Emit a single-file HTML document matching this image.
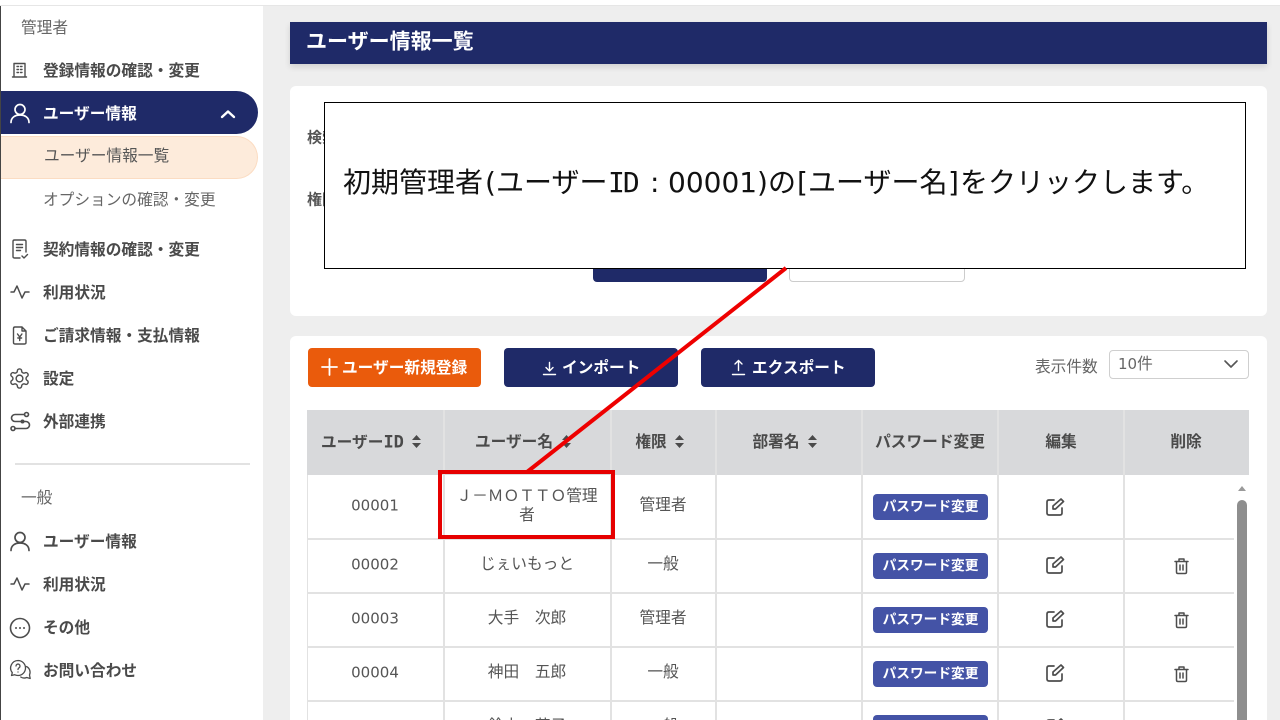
<!DOCTYPE html>
<html lang="ja">
<head>
<meta charset="utf-8">
<title>ユーザー情報一覧</title>
<style>
html,body{margin:0;padding:0;background:#eeeeee;overflow:hidden}
body{width:1280px;height:720px;font-family:"Liberation Sans","Noto Sans CJK JP",sans-serif;color:#555}
#root{position:absolute;left:0;top:0;width:1280px;height:720px;overflow:hidden;background:#eee}
#root div,#root span,#root svg{position:absolute;box-sizing:border-box}
.t{white-space:nowrap;line-height:1;font-size:15.7px;transform:translateY(calc(-50% + 2px))}
.c{white-space:nowrap;line-height:1;font-size:15.7px;transform:translate(-50%,calc(-50% + 2px));text-align:center}
.d{font-family:"DejaVu Sans",sans-serif;font-size:15px}
.b{font-weight:700}
.n{color:#4a4a4a;font-weight:700}
svg{fill:none;stroke:#4d4d4d;stroke-width:1.7;stroke-linecap:round;stroke-linejoin:round}
.h{color:#4a4a4a;font-weight:700}
.v{width:2px;background:#e2e2e2}
.hl{height:2px;background:#e2e2e2;left:307px;width:927px}
.badge{left:873px;width:115px;height:26px;background:#4453a6;border-radius:4px;color:#fff;font-size:13.7px;font-weight:700;text-align:center;line-height:25px;white-space:nowrap}
.btn{top:348px;height:39px;border-radius:4px;background:#1f2a68}
.s{fill:#4a4a4a;stroke:none}
.o{top:182px;font-size:28px;line-height:1;color:#111;white-space:nowrap;transform:translateY(calc(-50% + 1px))}
.ol{font-family:"DejaVu Sans",sans-serif}
</style>
</head>
<body>
<div id="root">
<!-- top bar and sidebar -->
<div style="left:0;top:0;width:1280px;height:6px;background:#fff;border-bottom:1px solid #e6e6e6"></div>
<div style="left:0;top:6px;width:263px;height:714px;background:#fff;border-left:1px solid #444"></div>

<div class="t" style="left:21px;top:27px;color:#666">管理者</div>
<svg style="left:11px;top:61px;stroke-width:1.4" width="18" height="18" viewBox="0 0 18 18"><path d="M3 16V2.500h11V16zM1.500 16h14M6 5.500h1.500M9.500 5.500H11M6 8.500h1.500M9.500 8.500H11M6 11.500h1.500M9.500 11.500H11"/></svg>
<div class="t n" style="left:43px;top:70px">登録情報の確認・変更</div>

<div style="left:1px;top:91px;width:257px;height:43px;background:#1f2a68;border-radius:0 22px 22px 0"></div>
<svg style="left:8px;top:102px;stroke:#fff" width="24" height="24" viewBox="0 0 24 24"><circle cx="12" cy="7.500" r="5"/><path d="M3 20.500c0-5 4-7.500 9-7.500s9 2.500 9 7.500"/></svg>
<div class="t b" style="left:43px;top:113px;color:#fff">ユーザー情報</div>
<svg style="left:219px;top:107px;stroke:#fff;stroke-width:2.400" width="18" height="14" viewBox="0 0 18 14"><path d="M3 10l6-5.500 6 5.500"/></svg>

<div style="left:1px;top:136px;width:257px;height:43px;background:#fdebdb;border:1px solid #fbdcc2;border-left:0;border-radius:0 22px 22px 0"></div>
<div class="t" style="left:44px;top:155px;color:#555">ユーザー情報一覧</div>
<div class="t" style="left:43px;top:199px;color:#666">オプションの確認・変更</div>

<svg style="left:10px;top:238px;stroke-width:1.400" width="20" height="22" viewBox="0 0 20 22"><path d="M10 20H4.500Q3 20 3 18.500V3.500Q3 2 4.500 2h10Q16 2 16 3.500V14M6.500 6.500h6M6.500 9.500h6M6.500 12.500h4M12 18l2 2 3.500-3.500"/></svg>
<div class="t n" style="left:43px;top:249px">契約情報の確認・変更</div>
<svg style="left:9px;top:282px;stroke-width:1.500" width="22" height="20" viewBox="0 0 22 20"><path d="M2 10h3l3-6 5 12 3-6h4"/></svg>
<div class="t n" style="left:43px;top:292px">利用状況</div>
<svg style="left:10px;top:325px;stroke-width:1.400" width="20" height="21" viewBox="0 0 20 21"><path d="M12 2H5Q3.500 2 3.500 3.500v14Q3.500 19 5 19h9.500Q16 19 16 17.500V6zM12 2v4h4M7.500 9l2.200 3 2.200-3M9.700 12v3.500M7.800 13h3.800"/></svg>
<div class="t n" style="left:43px;top:335px">ご請求情報・支払情報</div>
<svg style="left:8px;top:367px;stroke-width:1.500" width="23" height="23" viewBox="0 0 24 24"><circle cx="12" cy="12" r="3.500"/><path d="M12.220 2h-.44a2 2 0 0 0-2 2v.18a2 2 0 0 1-1 1.730l-.43.250a2 2 0 0 1-2 0l-.15-.08a2 2 0 0 0-2.730.730l-.22.380a2 2 0 0 0 .730 2.730l.15.100a2 2 0 0 1 1 1.720v.510a2 2 0 0 1-1 1.740l-.15.090a2 2 0 0 0-.730 2.730l.22.380a2 2 0 0 0 2.730.730l.15-.08a2 2 0 0 1 2 0l.43.250a2 2 0 0 1 1 1.730V20a2 2 0 0 0 2 2h.44a2 2 0 0 0 2-2v-.18a2 2 0 0 1 1-1.730l.43-.25a2 2 0 0 1 2 0l.15.08a2 2 0 0 0 2.730-.73l.22-.39a2 2 0 0 0-.73-2.730l-.15-.08a2 2 0 0 1-1-1.740v-.5a2 2 0 0 1 1-1.740l.15-.09a2 2 0 0 0 .73-2.730l-.22-.38a2 2 0 0 0-2.730-.73l-.15.08a2 2 0 0 1-2 0l-.43-.25a2 2 0 0 1-1-1.730V4a2 2 0 0 0-2-2z"/></svg>
<div class="t n" style="left:43px;top:378px">設定</div>
<svg style="left:9px;top:411px;stroke-width:1.600" width="22" height="21" viewBox="0 0 22 21"><circle cx="17.500" cy="3.500" r="2"/><circle cx="4" cy="17.500" r="2"/><circle cx="13.500" cy="10.500" r="1.200" fill="#4d4d4d"/><path d="M15.500 3.500H6a3.500 3.500 0 0 0 0 7h11a3.500 3.500 0 0 1 0 7H6"/></svg>
<div class="t n" style="left:43px;top:421px">外部連携</div>

<div style="left:15px;top:463px;width:235px;height:2px;background:#e2e2e2"></div>
<div class="t" style="left:21px;top:497px;color:#666">一般</div>
<svg style="left:8px;top:530px" width="24" height="24" viewBox="0 0 24 24"><circle cx="12" cy="7.500" r="5"/><path d="M3 20.500c0-5 4-7.500 9-7.500s9 2.500 9 7.500"/></svg>
<div class="t n" style="left:43px;top:541px">ユーザー情報</div>
<svg style="left:9px;top:574px;stroke-width:1.500" width="22" height="20" viewBox="0 0 22 20"><path d="M2 10h3l3-6 5 12 3-6h4"/></svg>
<div class="t n" style="left:43px;top:584px">利用状況</div>
<svg style="left:9px;top:617px;stroke-width:1.600" width="22" height="22" viewBox="0 0 22 22"><circle cx="11" cy="11" r="9.500"/><path d="M7 11h.01M11 11h.01M15 11h.01" stroke-width="2"/></svg>
<div class="t n" style="left:43px;top:627px">その他</div>
<svg style="left:9px;top:659px;stroke-width:1.300" width="23" height="22" viewBox="0 0 23 22"><path d="M9 1.500a7.500 7.500 0 0 1 0 15c-1.500 0-2.500-.3-3.500-.8L2.500 16.500l.8-2.800A7.500 7.500 0 0 1 9 1.500z"/><path d="M7 7a2 2 0 1 1 3 1.800c-.7.400-1 .8-1 1.700M9 13h.01M17.500 7.500a6.500 6.500 0 0 1 3 8.500l.7 3.500-3.500-1a6.500 6.500 0 0 1-6-.5"/></svg>
<div class="t n" style="left:43px;top:670px">お問い合わせ</div>

<!-- main -->
<div style="left:290px;top:22px;width:977px;height:42px;background:#1f2a68;box-shadow:0 3px 6px rgba(0,0,0,.12)"></div>
<div class="t b" style="left:306px;top:40px;font-size:21px;color:#fff">ユーザー情報一覧</div>

<div style="left:290px;top:86px;width:977px;height:230px;background:#fff;border-radius:6px"></div>
<div class="t b" style="left:307px;top:136px;color:#555;font-size:15px">検索</div>
<div class="t b" style="left:307px;top:198px;color:#555;font-size:15px">権限</div>
<div style="left:593px;top:250px;width:174px;height:32px;background:#1f2a68;border-radius:4px"></div>
<div style="left:789px;top:250px;width:176px;height:32px;background:#fff;border:1px solid #ccc;border-radius:4px"></div>

<div style="left:290px;top:336px;width:977px;height:400px;background:#fff;border-radius:6px"></div>

<div class="btn" style="left:308px;width:173px;background:#ea5b0c"></div>
<svg style="left:321px;top:358px;stroke:#fff;stroke-width:1.800" width="17" height="18" viewBox="0 0 17 18"><path d="M8.500 1v16M1 9h15"/></svg>
<div class="t b" style="left:342px;top:367px;color:#fff">ユーザー新規登録</div>
<div class="btn" style="left:504px;width:174px"></div>
<svg style="left:542px;top:361px;stroke:#fff;stroke-width:1.400" width="15" height="15" viewBox="0 0 15 15"><path d="M7.500 1.500v8M4 6.500l3.500 3.500 3.500-3.500M1.500 13.500h12"/></svg>
<div class="t b" style="left:562px;top:367px;color:#fff">インポート</div>
<div class="btn" style="left:701px;width:174px"></div>
<svg style="left:731px;top:359px;stroke:#fff;stroke-width:1.400" width="15" height="17" viewBox="0 0 15 17"><path d="M7.500 11.500v-10M4 5l3.500-3.500L11 5M1.500 15.500h12"/></svg>
<div class="t b" style="left:752px;top:367px;color:#fff">エクスポート</div>

<div class="t" style="left:1035px;top:366px;color:#666">表示件数</div>
<div style="left:1109px;top:350px;width:140px;height:29px;background:#fff;border:1.500px solid #cfcfcf;border-radius:4px"></div>
<div class="t" style="left:1118px;top:363px;color:#666"><span style="position:static;font-family:'DejaVu Sans',sans-serif;font-size:15px">10</span>件</div>
<svg style="left:1223px;top:358px;stroke:#555;stroke-width:1.600" width="16" height="12" viewBox="0 0 16 12"><path d="M2 3l6 6 6-6"/></svg>

<!-- table header -->
<div style="left:307px;top:410px;width:942px;height:65px;background:#d8d9db"></div>
<div class="t h" style="left:321px;top:441px">ユーザー<span style="position:static;font-family:'DejaVu Sans Mono',monospace;font-size:17px">ID</span></div>
<div class="c h" style="left:514px;top:441px">ユーザー名</div>
<div class="c h" style="left:651px;top:441px">権限</div>
<div class="c h" style="left:776px;top:441px">部署名</div>
<div class="c h" style="left:930px;top:441px">パスワード変更</div>
<div class="c h" style="left:1061px;top:441px">編集</div>
<div class="c h" style="left:1186px;top:441px">削除</div>
<svg class="s" style="left:411px;top:435px" width="11" height="13" viewBox="0 0 11 13"><path d="M5.500 0l4.500 5H1zM5.500 13L1 8h9z"/></svg>
<svg class="s" style="left:561px;top:435px" width="11" height="13" viewBox="0 0 11 13"><path d="M5.500 0l4.500 5H1zM5.500 13L1 8h9z"/></svg>
<svg class="s" style="left:674px;top:435px" width="11" height="13" viewBox="0 0 11 13"><path d="M5.500 0l4.500 5H1zM5.500 13L1 8h9z"/></svg>
<svg class="s" style="left:807px;top:435px" width="11" height="13" viewBox="0 0 11 13"><path d="M5.500 0l4.500 5H1zM5.500 13L1 8h9z"/></svg>

<!-- lines -->
<div class="v" style="left:307px;top:475px;height:245px;width:1px"></div>
<div class="v" style="left:443px;top:410px;height:310px"></div>
<div class="v" style="left:610px;top:410px;height:310px"></div>
<div class="v" style="left:715px;top:410px;height:310px"></div>
<div class="v" style="left:861px;top:410px;height:310px"></div>
<div class="v" style="left:997px;top:410px;height:310px"></div>
<div class="v" style="left:1123px;top:410px;height:310px"></div>
<div class="hl" style="top:538px"></div>
<div class="hl" style="top:592px"></div>
<div class="hl" style="top:646px"></div>
<div class="hl" style="top:700px"></div>

<!-- rows -->
<div class="c d" style="left:375px;top:504px">00001</div>
<div class="c" style="left:527px;top:504px;line-height:19px;width:150px;white-space:normal">Ｊ－ＭＯＴＴＯ管理者</div>
<div class="c" style="left:663px;top:504px">管理者</div>
<div class="badge" style="top:494px">パスワード変更</div>
<div class="c d" style="left:375px;top:563px">00002</div>
<div class="c" style="left:527px;top:563px">じぇいもっと</div>
<div class="c" style="left:663px;top:563px">一般</div>
<div class="badge" style="top:553px">パスワード変更</div>
<div class="c d" style="left:375px;top:617px">00003</div>
<div class="c" style="left:527px;top:617px">大手　次郎</div>
<div class="c" style="left:663px;top:617px">管理者</div>
<div class="badge" style="top:607px">パスワード変更</div>
<div class="c d" style="left:375px;top:671px">00004</div>
<div class="c" style="left:527px;top:671px">神田　五郎</div>
<div class="c" style="left:663px;top:671px">一般</div>
<div class="badge" style="top:661px">パスワード変更</div>
<div class="c" style="left:527px;top:725px">鈴木　花子</div>
<div class="c" style="left:663px;top:725px">一般</div>
<div class="badge" style="top:715px">パスワード変更</div>

<!-- edit icons -->
<svg style="left:1045px;top:497px" width="20" height="20" viewBox="0 0 20 20"><path d="M9 3H4Q2 3 2 5v11q0 2 2 2h11q2 0 2-2v-5M8 12V9l8-7 2.500 2.500-8 7.500z"/></svg>
<svg style="left:1045px;top:555px" width="20" height="20" viewBox="0 0 20 20"><path d="M9 3H4Q2 3 2 5v11q0 2 2 2h11q2 0 2-2v-5M8 12V9l8-7 2.500 2.500-8 7.500z"/></svg>
<svg style="left:1045px;top:609px" width="20" height="20" viewBox="0 0 20 20"><path d="M9 3H4Q2 3 2 5v11q0 2 2 2h11q2 0 2-2v-5M8 12V9l8-7 2.500 2.500-8 7.500z"/></svg>
<svg style="left:1045px;top:663px" width="20" height="20" viewBox="0 0 20 20"><path d="M9 3H4Q2 3 2 5v11q0 2 2 2h11q2 0 2-2v-5M8 12V9l8-7 2.500 2.500-8 7.500z"/></svg>
<svg style="left:1045px;top:717px" width="20" height="20" viewBox="0 0 20 20"><path d="M9 3H4Q2 3 2 5v11q0 2 2 2h11q2 0 2-2v-5M8 12V9l8-7 2.500 2.500-8 7.500z"/></svg>
<!-- trash icons -->
<svg style="left:1173px;top:557px;stroke-width:1.500" width="17" height="18" viewBox="0 0 17 18"><path d="M2 4.500h13M6 4.500V2h5v2.500M3.500 4.500V15q0 1.500 1.500 1.500h7q1.500 0 1.500-1.500V4.500M7 8v5M10 8v5"/></svg>
<svg style="left:1173px;top:611px;stroke-width:1.500" width="17" height="18" viewBox="0 0 17 18"><path d="M2 4.500h13M6 4.500V2h5v2.500M3.500 4.500V15q0 1.500 1.500 1.500h7q1.500 0 1.500-1.500V4.500M7 8v5M10 8v5"/></svg>
<svg style="left:1173px;top:665px;stroke-width:1.500" width="17" height="18" viewBox="0 0 17 18"><path d="M2 4.500h13M6 4.500V2h5v2.500M3.500 4.500V15q0 1.500 1.500 1.500h7q1.500 0 1.500-1.500V4.500M7 8v5M10 8v5"/></svg>

<!-- scrollbar -->
<svg class="s" style="left:1237px;top:485px;fill:#9a9a9a" width="10" height="7" viewBox="0 0 10 7"><path d="M5 1l4 5H1z"/></svg>
<div style="left:1237px;top:500px;width:10px;height:230px;background:#8e8e8e;border-radius:5px 5px 0 0"></div>

<!-- callout -->
<div style="left:324px;top:102px;width:922px;height:167px;background:#fff;border:1px solid #000"></div>
<div class="o" style="left:343px">初期管理者</div>
<div class="o ol" style="left:485px">(</div>
<div class="o" style="left:496px">ユーザー</div>
<div class="o" style="left:608px;font-family:'DejaVu Sans Mono',monospace;letter-spacing:-2px">ID</div>
<div class="o ol" style="left:650px">:</div>
<div class="o ol" style="left:668px">00001</div>
<div class="o ol" style="left:757px">)</div>
<div class="o" style="left:768px">の</div>
<div class="o ol" style="left:797px">[</div>
<div class="o" style="left:808px">ユーザー名</div>
<div class="o ol" style="left:948px">]</div>
<div class="o" style="left:960px">をクリックします。</div>
<svg style="left:0;top:0;stroke:#ee0000;stroke-width:4;stroke-linecap:butt" width="1280" height="720" viewBox="0 0 1280 720"><path d="M786 268L527 472"/></svg>
<div style="left:438px;top:470px;width:177px;height:69px;border:4px solid #e60000"></div>
</div>
</body>
</html>
